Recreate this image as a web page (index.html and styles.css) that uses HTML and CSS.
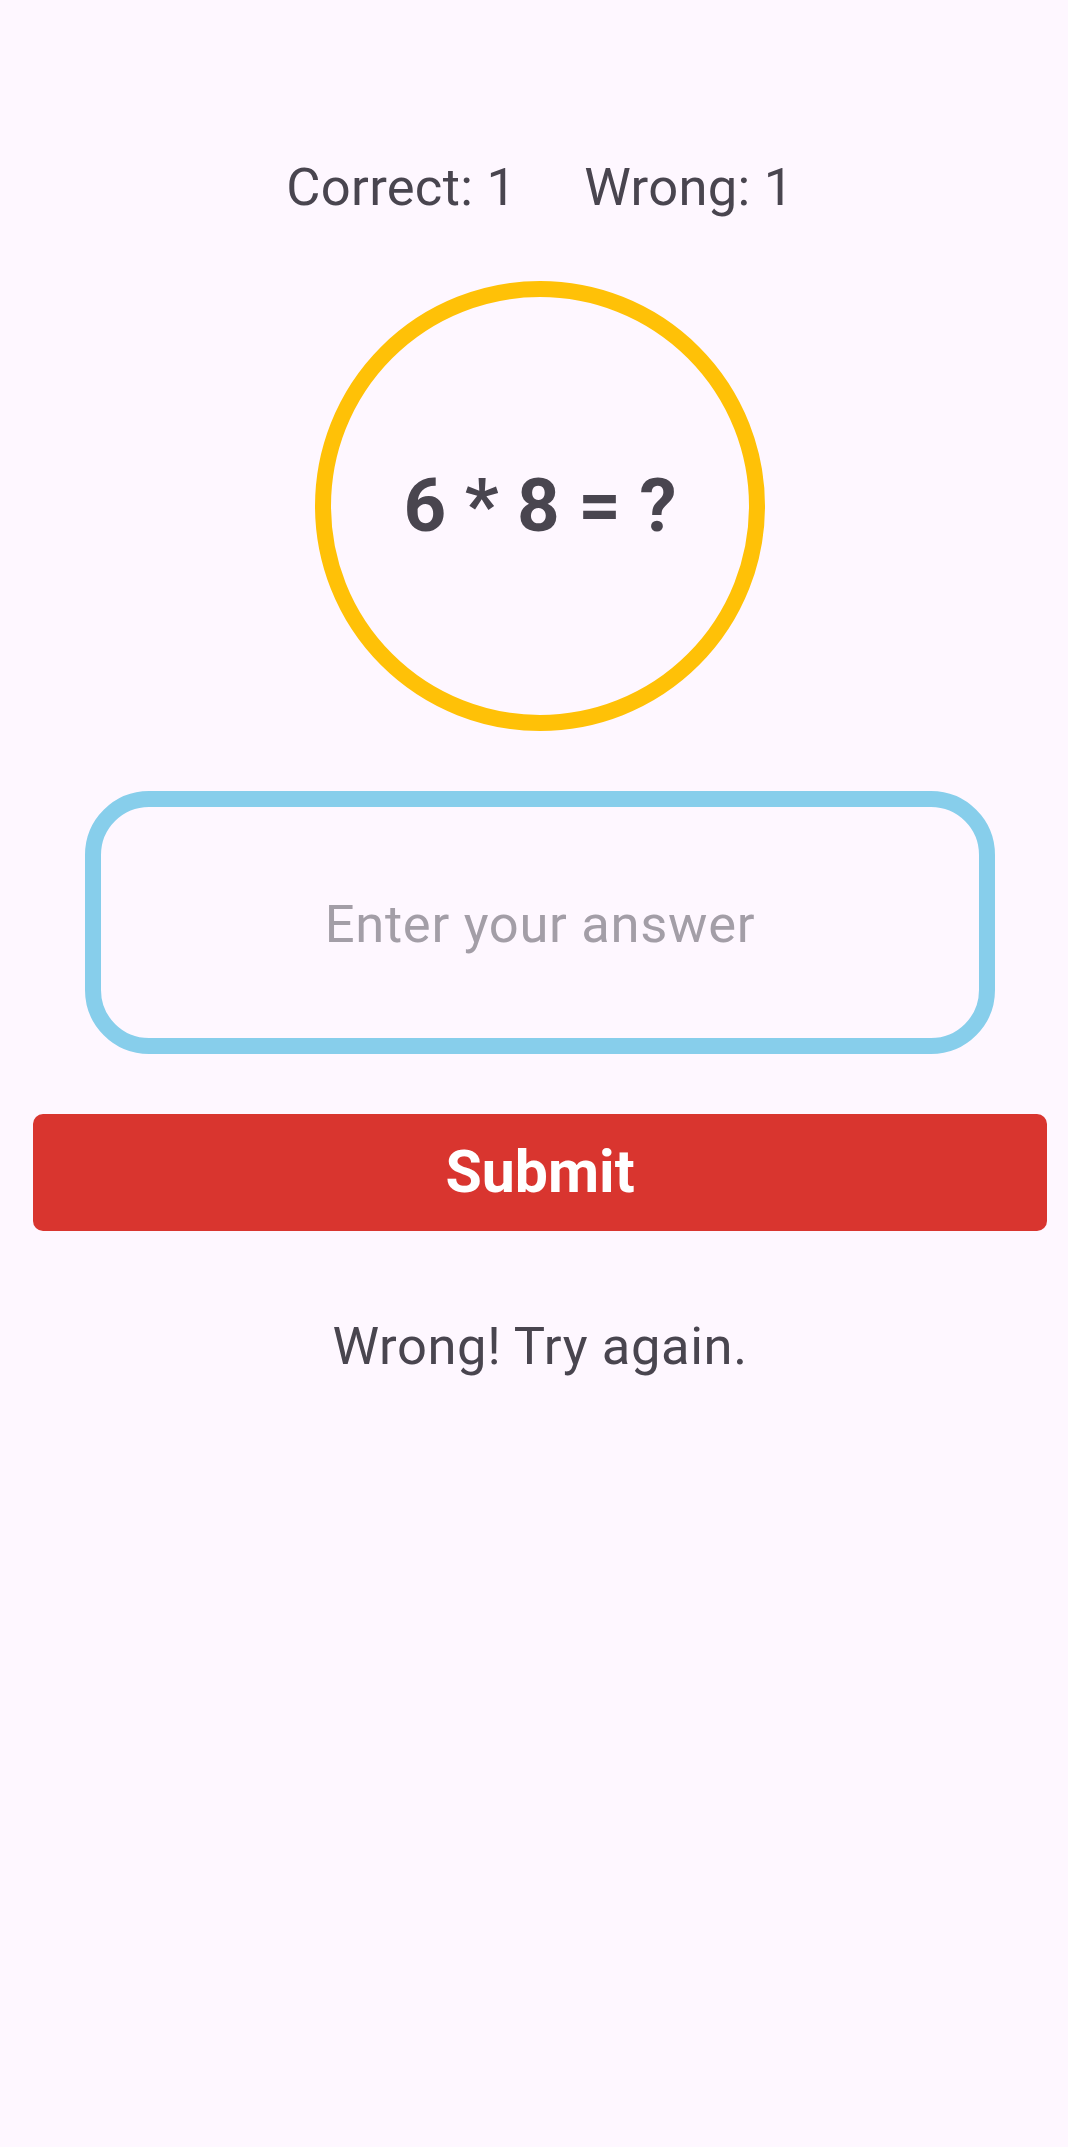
FILE: index.html
```html
<!DOCTYPE html>
<html lang="en">
<head>
<meta charset="utf-8">
<title>Multiplication Quiz</title>
<link rel="stylesheet" href="styles.css">
</head>
<body>
<main class="screen">
  <div class="score">
    <span class="score-item">Correct: 1</span>
    <span class="score-item">Wrong: 1</span>
  </div>
  <div class="question">
    <span class="question-text">6 * 8 = ?</span>
  </div>
  <input class="answer" type="text" placeholder="Enter your answer">
  <button class="submit" type="button">Submit</button>
  <p class="feedback">Wrong! Try again.</p>
</main>
</body>
</html>
```
FILE: styles.css
```css
html, body {
  margin: 0;
  padding: 0;
  background: #fef7ff;
  overflow: hidden;
}

body {
  font-family: Roboto, "Liberation Sans", sans-serif;
  color: #49454f;
  height: 2147px;
}

.screen {
  width: 1080px;
  display: flex;
  flex-direction: column;
  align-items: center;
  padding-top: 157px;
}

.score {
  display: flex;
  gap: 68px;
  font-size: 52.5px;
  letter-spacing: 0.3px;
  line-height: 1.172;
}

.question {
  margin-top: 62px;
  width: 450px;
  height: 450px;
  box-sizing: border-box;
  border: 16px solid #ffc107;
  border-radius: 50%;
  display: flex;
  align-items: center;
  justify-content: center;
}

.question-text {
  font-size: 74.5px;
  font-weight: 700;
  line-height: 1.172;
  color: #49454f;
}

.answer {
  margin-top: 60px;
  width: 910px;
  height: 263px;
  box-sizing: border-box;
  border: 16px solid #87ceeb;
  border-radius: 64px;
  background: transparent;
  font-family: Roboto, "Liberation Sans", sans-serif;
  font-size: 52.5px;
  letter-spacing: 0.7px;
  text-align: center;
  color: #1d1b20;
  padding: 4px 20px 0;
  outline: none;
}

.answer::placeholder {
  color: #a39ea7;
  opacity: 1;
}

.submit {
  margin-top: 60px;
  width: 1014px;
  height: 117px;
  border: none;
  border-radius: 10px;
  background: #d9352f;
  color: #ffffff;
  font-family: Roboto, "Liberation Sans", sans-serif;
  font-size: 59px;
  font-weight: 700;
  line-height: 1.172;
  padding: 0;
}

.feedback {
  margin: 85px 0 0;
  font-size: 52.5px;
  letter-spacing: 0.6px;
  line-height: 1.172;
  color: #49454f;
}
```
